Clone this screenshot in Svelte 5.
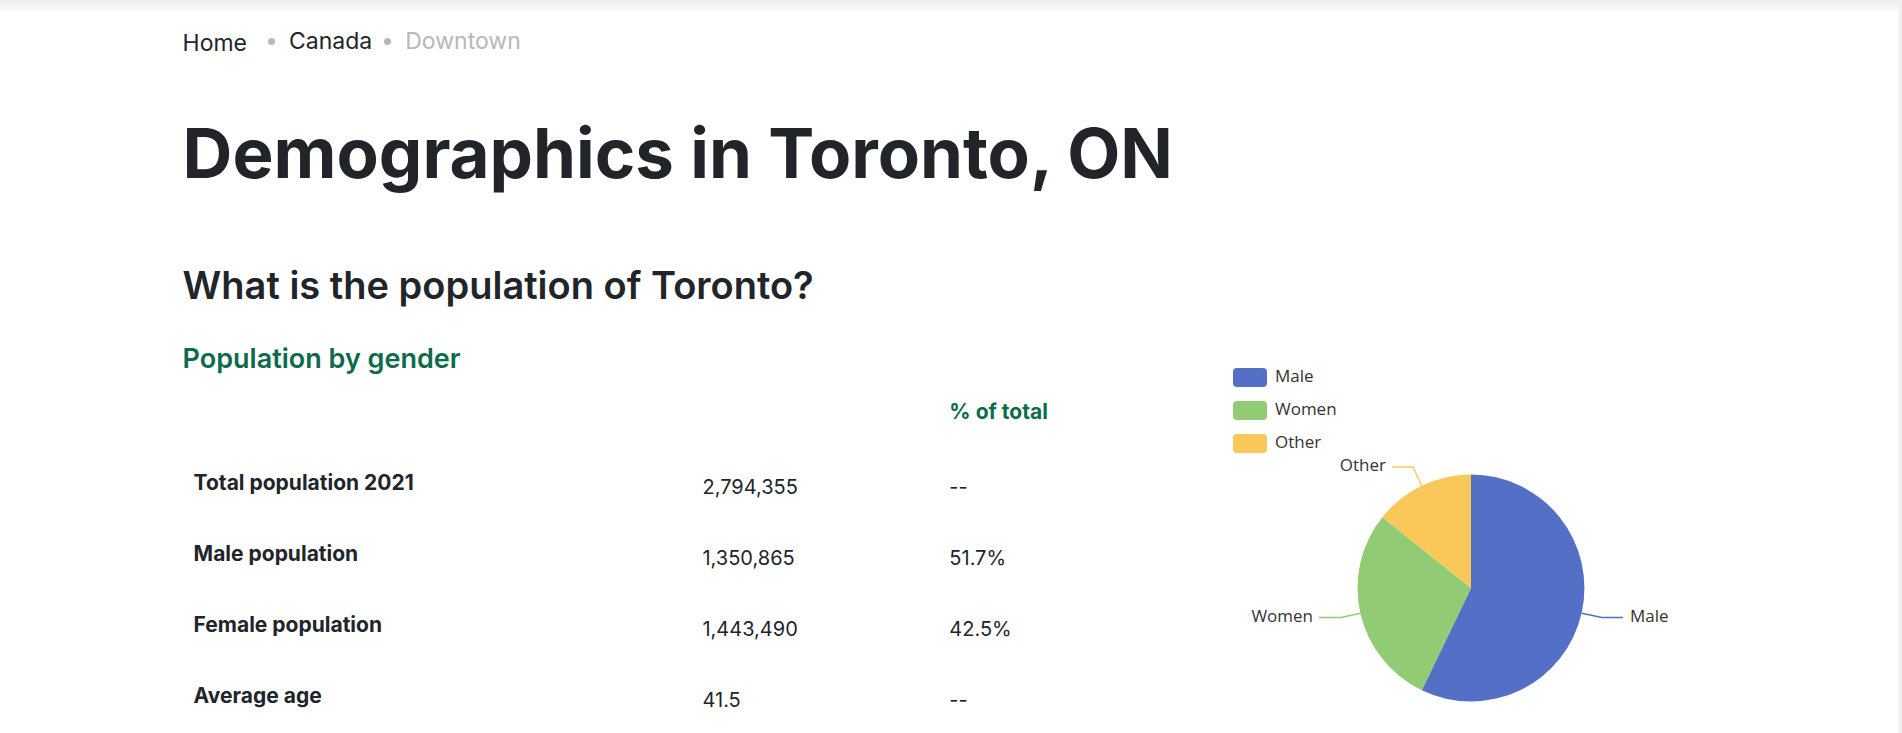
<script>
  const rows = [
    { label: 'Total population 2021', value: '2,794,355', share: '--' },
    { label: 'Male population', value: '1,350,865', share: '51.7%' },
    { label: 'Female population', value: '1,443,490', share: '42.5%' },
    { label: 'Average age', value: '41.5', share: '--' }
  ];

  const legend = [
    { name: 'Male', color: '#5470c6' },
    { name: 'Women', color: '#91cc75' },
    { name: 'Other', color: '#fac858' }
  ];
</script>

<div class="page">
  <nav aria-label="Breadcrumb">
    <ol>
      <li class="home"><a href="/">Home</a></li>
      <li><a href="/canada">Canada</a></li>
      <li class="current" aria-current="page">Downtown</li>
    </ol>
  </nav>

  <main>
    <h1>Demographics in Toronto, ON</h1>
    <h2>What is the population of Toronto?</h2>

    <div class="columns">
      <section>
        <h3>Population by gender</h3>
        <table>
          <thead>
            <tr>
              <td></td>
              <td></td>
              <th scope="col">% of total</th>
            </tr>
          </thead>
          <tbody>
            {#each rows as row}
              <tr>
                <th scope="row">{row.label}</th>
                <td>{row.value}</td>
                <td>{row.share}</td>
              </tr>
            {/each}
          </tbody>
        </table>
      </section>

      <svg class="chart" viewBox="0 0 490 364" role="img" aria-label="Population by gender">
        {#each legend as item, i}
          <rect x="7" y={7 + i * 33} width="34" height="19" rx="4" fill={item.color} />
          <text x="49" y={21 + i * 33}>{item.name}</text>
        {/each}

        <path d="M245 227V113.5A113.5 113.5 0 1 1 195.8 329.3Z" fill="#5470c6" />
        <path d="M245 227L195.8 329.3A113.5 113.5 0 0 1 156.3 156.2Z" fill="#91cc75" />
        <path d="M245 227L156.3 156.2A113.5 113.5 0 0 1 245 113.5Z" fill="#fac858" />

        <path class="lead" d="M355.7 252.3L376 256.5H397" stroke="#5470c6" />
        <path class="lead" d="M134.3 252.3L115 256.5H93" stroke="#91cc75" />
        <path class="lead" d="M195.8 124.7L187 106H166" stroke="#fac858" />
        <text x="404" y="261">Male</text>
        <text x="87" y="261" text-anchor="end">Women</text>
        <text x="160" y="110" text-anchor="end">Other</text>
      </svg>
    </div>
  </main>
</div>

<style>
  :global(body) {
    margin: 0;
    background: #fff;
  }

  .page {
    box-sizing: border-box;
    min-height: 100vh;
    padding: 28px 9.6% 0;
    border-right: 3px solid #f0f0f0;
    background: linear-gradient(#ededed, #fff 14px);
    color: #212529;
    font: 20px/28px Inter, sans-serif;
  }

  ol {
    display: flex;
    margin: 0;
    padding: 0;
    list-style: none;
    font-size: 23px;
  }

  li {
    display: flex;
    align-items: center;
    height: 26px;
  }

  li + li::before {
    content: '';
    width: 7px;
    height: 7px;
    margin: 0 14px 0 12px;
    border-radius: 50%;
    background: #b8b8b8;
  }

  .home {
    padding-top: 2px;
    margin-right: 9px;
  }

  a {
    color: inherit;
    text-decoration: none;
  }

  .current {
    color: #b8b8b8;
  }

  h1,
  h2,
  h3 {
    margin: 0;
    font-weight: 600;
  }

  h1 {
    padding-top: 53px;
    font-size: 69px;
    font-weight: 700;
    line-height: 88px;
    white-space: nowrap;
  }

  h2 {
    padding-top: 64px;
    font-size: 38px;
    line-height: 48px;
  }

  h3 {
    padding-top: 32px;
    font-size: 27px;
    line-height: 36px;
    color: #0c6b4b;
  }

  .columns {
    display: grid;
    grid-template-columns: 1044fr 490fr;
    align-items: start;
  }

  .chart {
    display: block;
    width: 100%;
    margin-top: 52px;
    fill: #333;
    font: 17px 'Open Sans', sans-serif;
  }

  .lead {
    fill: none;
    stroke-width: 1.4;
  }

  table {
    width: 100%;
    table-layout: fixed;
    border-collapse: collapse;
  }

  th,
  td {
    height: 71px;
    box-sizing: border-box;
    padding: 6px 11px 0;
    text-align: left;
  }

  th {
    padding: 0 11px 1px;
    font-size: 21px;
    font-weight: 700;
  }

  thead th {
    color: #0c6b4b;
  }

  thead td:first-child {
    width: 48.75%;
  }

  thead td:nth-child(2) {
    width: 23.65%;
  }
</style>
